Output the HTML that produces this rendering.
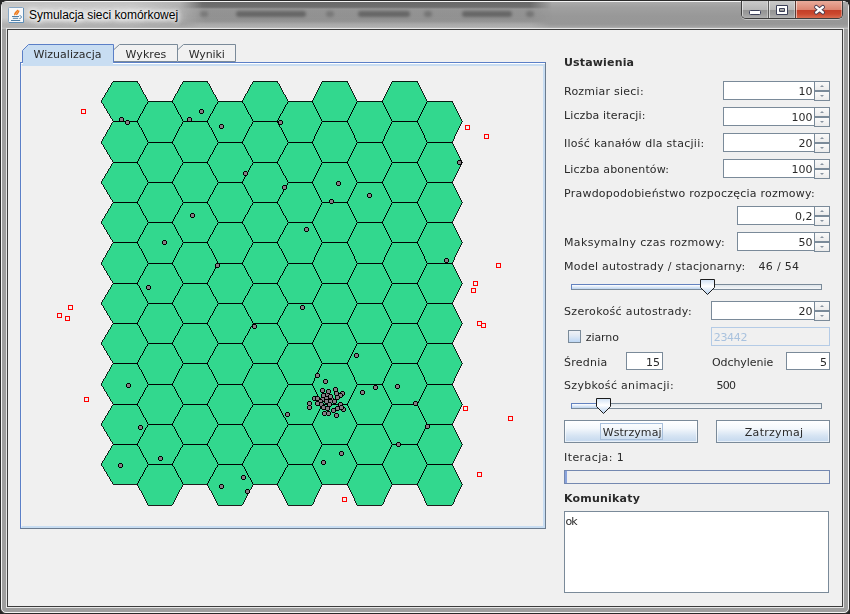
<!DOCTYPE html>
<html lang="pl"><head><meta charset="utf-8"><title>Symulacja sieci komórkowej</title>
<style>
html,body{margin:0;padding:0}
body{width:850px;height:614px;position:relative;overflow:hidden;background:#262626;font-family:"DejaVu Sans","Liberation Sans",sans-serif;font-size:11px;color:#222}
div,i{position:absolute;box-sizing:border-box;display:block}
#frame{left:0;top:0;width:850px;height:614px;border:1px solid #2a2a2a;border-radius:7px 7px 6px 6px;background:#9f9f9f;overflow:hidden}
#frame2{left:1px;top:1px;width:848px;height:612px;border:1px solid #f4f4f4;border-radius:6px 6px 5px 5px}
#tbar{left:2px;top:2px;width:846px;height:27px;background:linear-gradient(180deg,#ababab 0,#a0a0a0 5px,#989898 14px,#979797 22px,#a4a4a4 25px,#c4c4c4 27px)}
#tglow{left:2px;top:2px;width:230px;height:26px;background:linear-gradient(180deg,rgba(255,255,255,.3) 0,rgba(255,255,255,.5) 8px,rgba(255,255,255,.5) 16px,rgba(255,255,255,.22) 23px,rgba(255,255,255,.1) 26px);-webkit-mask-image:linear-gradient(90deg,#000 0,#000 130px,transparent 205px);mask-image:linear-gradient(90deg,#000 0,#000 130px,transparent 205px)}
#tblur{left:180px;top:2px;width:375px;height:26px;background:linear-gradient(180deg,rgba(40,40,40,.5) 0,rgba(50,50,50,.45) 5px,rgba(110,110,110,.2) 7px,rgba(120,120,120,.14) 19px,rgba(225,225,225,.22) 22px,rgba(225,225,225,.2) 26px);-webkit-mask-image:linear-gradient(90deg,transparent 0,#000 22px,#000 350px,transparent 372px);mask-image:linear-gradient(90deg,transparent 0,#000 22px,#000 350px,transparent 372px)}
.sm{top:11px;height:6px;background:#4a4a4a;opacity:.6;filter:blur(1.6px);border-radius:3px}
#inner1{left:6px;top:28px;width:838px;height:580px;border:1px solid #e6e6e6}
#inner2{left:7px;top:29px;width:836px;height:578px;border:1px solid #3c3c3c;background:#f0f0f0}
#title{left:29px;top:6px;height:18px;line-height:18px;font-family:"Liberation Sans",sans-serif;font-size:12px;color:#000;white-space:nowrap;letter-spacing:-.04px;text-shadow:0 0 5px #fff,0 0 5px #fff,0 0 8px #fff,0 0 12px rgba(255,255,255,.8)}
#icon{left:8px;top:7px;width:16px;height:16px}
#caps{left:741px;top:1px;width:102px;height:18px;border:1px solid #3e3e3e;border-top:none;border-radius:0 0 5px 5px;overflow:hidden;box-shadow:0 1px 0 0 rgba(255,255,255,.45)}
#caps div:after{content:"";position:absolute;left:0;top:0;right:0;bottom:0;box-shadow:inset 1px 0 0 rgba(255,255,255,.55),inset -1px 0 0 rgba(255,255,255,.35),inset 0 -1px 0 rgba(255,255,255,.4)}
#caps .m{top:0;height:18px;background:linear-gradient(180deg,#cacaca 0,#b6b6b6 9px,#959595 9.500px,#9c9c9c 13px,#b4b4b4 18px)}
#caps .c{left:53px;top:0;width:47px;height:18px;background:linear-gradient(180deg,#e9ab9b 0,#dc8470 9px,#c43f28 9.500px,#cb482e 13px,#dc7458 18px)}
.tabsel{left:22px;top:44px;width:92px;height:19px}
.panel{left:20px;top:62px;width:526px;height:467px;border:1px solid #5b7fc7;border-right-color:#6b7b8e;border-bottom-color:#6b7b8e;background:#f0f0f0}
.panel:before{content:"";position:absolute;left:0;top:0;right:0;bottom:0;border:2px solid #c8ddf2;border-top-width:3px;border-left:1px solid #f4f4f4}
.panel:after{content:"";position:absolute;left:0;top:0;right:0;height:1px;background:#fff}
.sp{height:19px;background:#fff;border:1px solid #7a8a99;box-shadow:inset 1px 0 0 #fff}
.sb{width:16px;height:10px;border:1px solid #7a8a99;background:linear-gradient(180deg,#fafafa,#ececec)}
.sb i{left:5px;width:0;height:0;border-left:2px solid transparent;border-right:2px solid transparent}
.sb i.up{top:3px;border-bottom:2.500px solid #8893a0}
.sb i.dn{top:3px;border-top:2.500px solid #8893a0}
.tf{height:18px;background:#fff;border:1px solid #7a8a99}
.btn{top:420px;height:23px;border:1px solid #7a8a99;background:linear-gradient(180deg,#ffffff 0,#f4f8fc 35%,#d6e4f3 70%,#c4d8ee 100%);box-shadow:inset 0 0 0 1px rgba(255,255,255,.6)}
.trk{height:6px;border:1px solid #7a8a99;background:linear-gradient(180deg,#dfe5ea,#f4f6f8)}
.trkf{height:6px;border:1px solid #6382bf;border-bottom-color:#7a8a99;border-right:none;background:linear-gradient(180deg,#ffffff,#bcd3ee)}
svg{position:absolute;left:0;top:0;will-change:transform}
svg text{font-family:"DejaVu Sans","Liberation Sans",sans-serif;font-size:11px;fill:#2a2a2a}
svg text.b{font-weight:bold}
</style></head><body>
<div id="frame"></div><div id="frame2"></div>
<div id="tbar"></div><div id="tblur"></div><div id="tglow"></div>
<div class="sm" style="left:236px;width:70px"></div><div class="sm" style="left:358px;width:52px"></div><div class="sm" style="left:462px;width:50px"></div><div class="sm" style="left:200px;width:8px;opacity:.35"></div><div class="sm" style="left:326px;width:8px;opacity:.35"></div><div class="sm" style="left:424px;width:8px;opacity:.4"></div><div class="sm" style="left:526px;width:8px;opacity:.4"></div>
<div id="inner1"></div><div id="inner2"></div>
<div id="title">Symulacja sieci komórkowej</div>
<div id="caps"><div class="m" style="left:0;width:26px"></div><div class="m" style="left:26px;width:27px;border-left:1px solid #5a5a5a"></div><div class="c" style="border-left:1px solid #5a3a34"></div></div>

<div class="panel"></div>
<div class="sp" style="left:723px;top:81px;width:92px"></div><div class="sb" style="left:814px;top:81px"><i class="up"></i></div><div class="sb" style="left:814px;top:91px"><i class="dn"></i></div><div class="sp" style="left:723px;top:107px;width:92px"></div><div class="sb" style="left:814px;top:107px"><i class="up"></i></div><div class="sb" style="left:814px;top:117px"><i class="dn"></i></div><div class="sp" style="left:723px;top:133px;width:92px"></div><div class="sb" style="left:814px;top:133px"><i class="up"></i></div><div class="sb" style="left:814px;top:143px"><i class="dn"></i></div><div class="sp" style="left:723px;top:159px;width:92px"></div><div class="sb" style="left:814px;top:159px"><i class="up"></i></div><div class="sb" style="left:814px;top:169px"><i class="dn"></i></div><div class="sp" style="left:737px;top:206px;width:78px"></div><div class="sb" style="left:814px;top:206px"><i class="up"></i></div><div class="sb" style="left:814px;top:216px"><i class="dn"></i></div><div class="sp" style="left:737px;top:232px;width:78px"></div><div class="sb" style="left:814px;top:232px"><i class="up"></i></div><div class="sb" style="left:814px;top:242px"><i class="dn"></i></div><div class="sp" style="left:711px;top:301px;width:104px"></div><div class="sb" style="left:814px;top:301px"><i class="up"></i></div><div class="sb" style="left:814px;top:311px"><i class="dn"></i></div>
<div class="tf" style="left:711px;top:327px;width:119px;height:19px;background:#f0f0f0;border-color:#b4cbe6"></div>
<div class="tf" style="left:626px;top:352px;width:37px"></div>
<div class="tf" style="left:786px;top:352px;width:44px"></div>
<div class="cb" style="left:568px;top:330px;width:13px;height:13px;border:1px solid #7a8a99;background:linear-gradient(180deg,#f0f2f6 0,#dfe8f4 45%,#bdd7f5 100%)"></div>
<div class="trk" style="left:571px;top:284px;width:251px"></div><div class="trkf" style="left:571px;top:284px;width:136px"></div>
<div class="trk" style="left:571px;top:403px;width:251px"></div><div class="trkf" style="left:571px;top:403px;width:32px"></div>
<div class="btn" style="left:564px;width:134px"></div><div class="btn" style="left:716px;width:114px"></div>
<div style="left:600px;top:423px;width:63px;height:17px;border:1px solid #a8c0dc"></div>
<div style="left:564px;top:470px;width:266px;height:14px;border:1px solid #7488b0;background:#f0f0f0"></div>
<div style="left:565px;top:471px;width:2px;height:12px;background:#8aa3dc"></div>
<div style="left:564px;top:511px;width:265px;height:82px;border:1px solid #7a8a99;background:#fff"></div>
<svg width="850" height="614" viewBox="0 0 850 614">
<defs>
<g id="d"><path d="M1 0h3v1h1v3h-1v1h-3v-1h-1v-3h1z" fill="#000"/><rect x="1" y="1" width="3" height="3" fill="#857f85"/></g>
<linearGradient id="tg" x1="0" y1="0" x2="0" y2="1"><stop offset="0" stop-color="#cfe0f4"/><stop offset=".45" stop-color="#ffffff"/><stop offset="1" stop-color="#b4cfee"/></linearGradient>
<g id="th"><path d="M.5 .5h14v8l-7 7-7-7z" fill="url(#tg)" stroke="#1c1c1c" stroke-width="1"/></g>
</defs>
<!-- tabs -->
<path d="M22.5 62.5V50.5L28.5 44.5H113.5V62.5" fill="#c8ddf2" stroke="#5b7fc7"/>
<rect x="23" y="62" width="90" height="4" fill="#c8ddf2"/>
<path d="M114 49.5L119.500 44.500H177.500V61.500H114" fill="#f1f1f1" stroke="#7a8a99"/>
<path d="M178 49.5L183.500 44.500H235.500V61.500H178" fill="#f1f1f1" stroke="#7a8a99"/>
<g shape-rendering="crispEdges">
<path transform="translate(-.25 -.25)" d="M101.5 101.5L113.5 81.5L137.5 81.5L148.5 101.5L137.5 121.5L113.5 121.5ZM101.5 142.5L113.5 121.5L137.5 121.5L148.5 142.5L137.5 162.5L113.5 162.5ZM101.5 182.5L113.5 162.5L137.5 162.5L148.5 182.5L137.5 202.5L113.5 202.5ZM101.5 222.5L113.5 202.5L137.5 202.5L148.5 222.5L137.5 242.5L113.5 242.5ZM101.5 263.5L113.5 242.5L137.5 242.5L148.5 263.5L137.5 283.5L113.5 283.5ZM101.5 303.5L113.5 283.5L137.5 283.5L148.5 303.5L137.5 323.5L113.5 323.5ZM101.5 343.5L113.5 323.5L137.5 323.5L148.5 343.5L137.5 363.5L113.5 363.5ZM101.5 384.5L113.5 363.5L137.5 363.5L148.5 384.5L137.5 404.5L113.5 404.5ZM101.5 424.5L113.5 404.5L137.5 404.5L148.5 424.5L137.5 444.5L113.5 444.5ZM101.5 464.5L113.5 444.5L137.5 444.5L148.5 464.5L137.5 484.5L113.5 484.5ZM137.5 121.5L148.5 101.5L172.5 101.5L183.5 121.5L172.5 142.5L148.5 142.5ZM137.5 162.5L148.5 142.5L172.5 142.5L183.5 162.5L172.5 182.5L148.5 182.5ZM137.5 202.5L148.5 182.5L172.5 182.5L183.5 202.5L172.5 222.5L148.5 222.5ZM137.5 242.5L148.5 222.5L172.5 222.5L183.5 242.5L172.5 263.5L148.5 263.5ZM137.5 283.5L148.5 263.5L172.5 263.5L183.5 283.5L172.5 303.5L148.5 303.5ZM137.5 323.5L148.5 303.5L172.5 303.5L183.5 323.5L172.5 343.5L148.5 343.5ZM137.5 363.5L148.5 343.5L172.5 343.5L183.5 363.5L172.5 384.5L148.5 384.5ZM137.5 404.5L148.5 384.5L172.5 384.5L183.5 404.5L172.5 424.5L148.5 424.5ZM137.5 444.5L148.5 424.5L172.5 424.5L183.5 444.5L172.5 464.5L148.5 464.5ZM137.5 484.5L148.5 464.5L172.5 464.5L183.5 484.5L172.5 505.5L148.5 505.5ZM172.5 101.5L183.5 81.5L207.5 81.5L218.5 101.5L207.5 121.5L183.5 121.5ZM172.5 142.5L183.5 121.5L207.5 121.5L218.5 142.5L207.5 162.5L183.5 162.5ZM172.5 182.5L183.5 162.5L207.5 162.5L218.5 182.5L207.5 202.5L183.5 202.5ZM172.5 222.5L183.5 202.5L207.5 202.5L218.5 222.5L207.5 242.5L183.5 242.5ZM172.5 263.5L183.5 242.5L207.5 242.5L218.5 263.5L207.5 283.5L183.5 283.5ZM172.5 303.5L183.5 283.5L207.5 283.5L218.5 303.5L207.5 323.5L183.5 323.5ZM172.5 343.5L183.5 323.5L207.5 323.5L218.5 343.5L207.5 363.5L183.5 363.5ZM172.5 384.5L183.5 363.5L207.5 363.5L218.5 384.5L207.5 404.5L183.5 404.5ZM172.5 424.5L183.5 404.5L207.5 404.5L218.5 424.5L207.5 444.5L183.5 444.5ZM172.5 464.5L183.5 444.5L207.5 444.5L218.5 464.5L207.5 484.5L183.5 484.5ZM207.5 121.5L218.5 101.5L242.5 101.5L253.5 121.5L242.5 142.5L218.5 142.5ZM207.5 162.5L218.5 142.5L242.5 142.5L253.5 162.5L242.5 182.5L218.5 182.5ZM207.5 202.5L218.5 182.5L242.5 182.5L253.5 202.5L242.5 222.5L218.5 222.5ZM207.5 242.5L218.5 222.5L242.5 222.5L253.5 242.5L242.5 263.5L218.5 263.5ZM207.5 283.5L218.5 263.5L242.5 263.5L253.5 283.5L242.5 303.5L218.5 303.5ZM207.5 323.5L218.5 303.5L242.5 303.5L253.5 323.5L242.5 343.5L218.5 343.5ZM207.5 363.5L218.5 343.5L242.5 343.5L253.5 363.5L242.5 384.5L218.5 384.5ZM207.5 404.5L218.5 384.5L242.5 384.5L253.5 404.5L242.5 424.5L218.5 424.5ZM207.5 444.5L218.5 424.5L242.5 424.5L253.5 444.5L242.5 464.5L218.5 464.5ZM207.5 484.5L218.5 464.5L242.5 464.5L253.5 484.5L242.5 505.5L218.5 505.5ZM242.5 101.5L253.5 81.5L277.5 81.5L288.5 101.5L277.5 121.5L253.5 121.5ZM242.5 142.5L253.5 121.5L277.5 121.5L288.5 142.5L277.5 162.5L253.5 162.5ZM242.5 182.5L253.5 162.5L277.5 162.5L288.5 182.5L277.5 202.5L253.5 202.5ZM242.5 222.5L253.5 202.5L277.5 202.5L288.5 222.5L277.5 242.5L253.5 242.5ZM242.5 263.5L253.5 242.5L277.5 242.5L288.5 263.5L277.5 283.5L253.5 283.5ZM242.5 303.5L253.5 283.5L277.5 283.5L288.5 303.5L277.5 323.5L253.5 323.5ZM242.5 343.5L253.5 323.5L277.5 323.5L288.5 343.5L277.5 363.5L253.5 363.5ZM242.5 384.5L253.5 363.5L277.5 363.5L288.5 384.5L277.5 404.5L253.5 404.5ZM242.5 424.5L253.5 404.5L277.5 404.5L288.5 424.5L277.5 444.5L253.5 444.5ZM242.5 464.5L253.5 444.5L277.5 444.5L288.5 464.5L277.5 484.5L253.5 484.5ZM277.5 121.5L288.5 101.5L312.5 101.5L322.5 121.5L312.5 142.5L288.5 142.5ZM277.5 162.5L288.5 142.5L312.5 142.5L322.5 162.5L312.5 182.5L288.5 182.5ZM277.5 202.5L288.5 182.5L312.5 182.5L322.5 202.5L312.5 222.5L288.5 222.5ZM277.5 242.5L288.5 222.5L312.5 222.5L322.5 242.5L312.5 263.5L288.5 263.5ZM277.5 283.5L288.5 263.5L312.5 263.5L322.5 283.5L312.5 303.5L288.5 303.5ZM277.5 323.5L288.5 303.5L312.5 303.5L322.5 323.5L312.5 343.5L288.5 343.5ZM277.5 363.5L288.5 343.5L312.5 343.5L322.5 363.5L312.5 384.5L288.5 384.5ZM277.5 404.5L288.5 384.5L312.5 384.5L322.5 404.5L312.5 424.5L288.5 424.5ZM277.5 444.5L288.5 424.5L312.5 424.5L322.5 444.5L312.5 464.5L288.5 464.5ZM277.5 484.5L288.5 464.5L312.5 464.5L322.5 484.5L312.5 505.5L288.5 505.5ZM312.5 101.5L322.5 81.5L347.5 81.5L357.5 101.5L347.5 121.5L322.5 121.5ZM312.5 142.5L322.5 121.5L347.5 121.5L357.5 142.5L347.5 162.5L322.5 162.5ZM312.5 182.5L322.5 162.5L347.5 162.5L357.5 182.5L347.5 202.5L322.5 202.5ZM312.5 222.5L322.5 202.5L347.5 202.5L357.5 222.5L347.5 242.5L322.5 242.5ZM312.5 263.5L322.5 242.5L347.5 242.5L357.5 263.5L347.5 283.5L322.5 283.5ZM312.5 303.5L322.5 283.5L347.5 283.5L357.5 303.5L347.5 323.5L322.5 323.5ZM312.5 343.5L322.5 323.5L347.5 323.5L357.5 343.5L347.5 363.5L322.5 363.5ZM312.5 384.5L322.5 363.5L347.5 363.5L357.5 384.5L347.5 404.5L322.5 404.5ZM312.5 424.5L322.5 404.5L347.5 404.5L357.5 424.5L347.5 444.5L322.5 444.5ZM312.5 464.5L322.5 444.5L347.5 444.5L357.5 464.5L347.5 484.5L322.5 484.5ZM347.5 121.5L357.5 101.5L382.5 101.5L392.5 121.5L382.5 142.5L357.5 142.5ZM347.5 162.5L357.5 142.5L382.5 142.5L392.5 162.5L382.5 182.5L357.5 182.5ZM347.5 202.5L357.5 182.5L382.5 182.5L392.5 202.5L382.5 222.5L357.5 222.5ZM347.5 242.5L357.5 222.5L382.5 222.5L392.5 242.5L382.5 263.5L357.5 263.5ZM347.5 283.5L357.5 263.5L382.5 263.5L392.5 283.5L382.5 303.5L357.5 303.5ZM347.5 323.5L357.5 303.5L382.5 303.5L392.5 323.5L382.5 343.5L357.5 343.5ZM347.5 363.5L357.5 343.5L382.5 343.5L392.5 363.5L382.5 384.5L357.5 384.5ZM347.5 404.5L357.5 384.5L382.5 384.5L392.5 404.5L382.5 424.5L357.5 424.5ZM347.5 444.5L357.5 424.5L382.5 424.5L392.5 444.5L382.5 464.5L357.5 464.5ZM347.5 484.5L357.5 464.5L382.5 464.5L392.5 484.5L382.5 505.5L357.5 505.5ZM382.5 101.5L392.5 81.5L417.5 81.5L427.5 101.5L417.5 121.5L392.5 121.5ZM382.5 142.5L392.5 121.5L417.5 121.5L427.5 142.5L417.5 162.5L392.5 162.5ZM382.5 182.5L392.5 162.5L417.5 162.5L427.5 182.5L417.5 202.5L392.5 202.5ZM382.5 222.5L392.5 202.5L417.5 202.5L427.5 222.5L417.5 242.5L392.5 242.5ZM382.5 263.5L392.5 242.5L417.5 242.5L427.5 263.5L417.5 283.5L392.5 283.5ZM382.5 303.5L392.5 283.5L417.5 283.5L427.5 303.5L417.5 323.5L392.5 323.5ZM382.5 343.5L392.5 323.5L417.5 323.5L427.5 343.5L417.5 363.5L392.5 363.5ZM382.5 384.5L392.5 363.5L417.5 363.5L427.5 384.5L417.5 404.5L392.5 404.5ZM382.5 424.5L392.5 404.5L417.5 404.5L427.5 424.5L417.5 444.5L392.5 444.5ZM382.5 464.5L392.5 444.5L417.5 444.5L427.5 464.5L417.5 484.5L392.5 484.5ZM417.5 121.5L427.5 101.5L452.5 101.5L462.5 121.5L452.5 142.5L427.5 142.5ZM417.5 162.5L427.5 142.5L452.5 142.5L462.5 162.5L452.5 182.5L427.5 182.5ZM417.5 202.5L427.5 182.5L452.5 182.5L462.5 202.5L452.5 222.5L427.5 222.5ZM417.5 242.5L427.5 222.5L452.5 222.5L462.5 242.5L452.5 263.5L427.5 263.5ZM417.5 283.5L427.5 263.5L452.5 263.5L462.5 283.5L452.5 303.5L427.5 303.5ZM417.5 323.5L427.5 303.5L452.5 303.5L462.5 323.5L452.5 343.5L427.5 343.5ZM417.5 363.5L427.5 343.5L452.5 343.5L462.5 363.5L452.5 384.5L427.5 384.5ZM417.5 404.5L427.5 384.5L452.5 384.5L462.5 404.5L452.5 424.5L427.5 424.5ZM417.5 444.5L427.5 424.5L452.5 424.5L462.5 444.5L452.5 464.5L427.5 464.5ZM417.5 484.5L427.5 464.5L452.5 464.5L462.5 484.5L452.5 505.5L427.5 505.5Z" fill="#32d88e" stroke="#000" stroke-width="0.87"/>
<g fill="none" stroke="#f00" stroke-width="1"><rect x="81.5" y="109.5" width="4" height="4"/><rect x="465.5" y="125.5" width="4" height="4"/><rect x="484.5" y="134.5" width="4" height="4"/><rect x="496.5" y="263.5" width="4" height="4"/><rect x="473.5" y="281.5" width="4" height="4"/><rect x="471.5" y="288.5" width="4" height="4"/><rect x="68.5" y="305.5" width="4" height="4"/><rect x="57.5" y="313.5" width="4" height="4"/><rect x="65.5" y="316.5" width="4" height="4"/><rect x="84.5" y="397.5" width="4" height="4"/><rect x="477.5" y="321.5" width="4" height="4"/><rect x="481.5" y="323.5" width="4" height="4"/><rect x="463.5" y="406.5" width="4" height="4"/><rect x="508.5" y="416.5" width="4" height="4"/><rect x="477.5" y="472.5" width="4" height="4"/><rect x="342.5" y="497.5" width="4" height="4"/></g>
<use href="#d" x="324" y="393"/><use href="#d" x="321" y="393"/><use href="#d" x="325" y="392"/><use href="#d" x="320" y="397"/><use href="#d" x="318" y="399"/><use href="#d" x="319" y="402"/><use href="#d" x="329" y="397"/><use href="#d" x="312" y="396"/><use href="#d" x="340" y="391"/><use href="#d" x="334" y="391"/><use href="#d" x="338" y="402"/><use href="#d" x="341" y="407"/><use href="#d" x="320" y="388"/><use href="#d" x="326" y="389"/><use href="#d" x="333" y="387"/><use href="#d" x="338" y="393"/><use href="#d" x="335" y="395"/><use href="#d" x="328" y="394"/><use href="#d" x="324" y="396"/><use href="#d" x="315" y="396"/><use href="#d" x="315" y="401"/><use href="#d" x="307" y="401"/><use href="#d" x="307" y="405"/><use href="#d" x="324" y="399"/><use href="#d" x="328" y="399"/><use href="#d" x="332" y="399"/><use href="#d" x="327" y="402"/><use href="#d" x="321" y="405"/><use href="#d" x="325" y="406"/><use href="#d" x="331" y="408"/><use href="#d" x="335" y="406"/><use href="#d" x="339" y="405"/><use href="#d" x="322" y="411"/><use href="#d" x="326" y="411"/><use href="#d" x="334" y="413"/><use href="#d" x="119" y="117"/><use href="#d" x="125" y="120"/><use href="#d" x="187" y="117"/><use href="#d" x="199" y="109"/><use href="#d" x="219" y="124"/><use href="#d" x="243" y="171"/><use href="#d" x="278" y="120"/><use href="#d" x="336" y="181"/><use href="#d" x="282" y="185"/><use href="#d" x="457" y="160"/><use href="#d" x="190" y="213"/><use href="#d" x="162" y="240"/><use href="#d" x="146" y="285"/><use href="#d" x="329" y="199"/><use href="#d" x="367" y="193"/><use href="#d" x="304" y="227"/><use href="#d" x="215" y="263"/><use href="#d" x="444" y="258"/><use href="#d" x="126" y="383"/><use href="#d" x="300" y="305"/><use href="#d" x="252" y="324"/><use href="#d" x="354" y="353"/><use href="#d" x="315" y="373"/><use href="#d" x="323" y="379"/><use href="#d" x="360" y="390"/><use href="#d" x="285" y="412"/><use href="#d" x="373" y="385"/><use href="#d" x="395" y="384"/><use href="#d" x="413" y="401"/><use href="#d" x="138" y="425"/><use href="#d" x="158" y="456"/><use href="#d" x="118" y="463"/><use href="#d" x="339" y="451"/><use href="#d" x="321" y="460"/><use href="#d" x="241" y="475"/><use href="#d" x="219" y="484"/><use href="#d" x="245" y="489"/><use href="#d" x="425" y="424"/><use href="#d" x="396" y="442"/>
</g>
<use href="#th" x="700" y="279"/><use href="#th" x="596" y="398"/>
<!-- caption icons -->
<rect x="749.5" y="10.5" width="11" height="4" rx="1" fill="#fff" stroke="#3c4058"/>
<path d="M776.5 5.5h11v9h-11z M779.500 8.500v3h5v-3z" fill="#fff" fill-rule="evenodd" stroke="#3c4058"/>
<path d="M816.300 7.100L822.800 12.400M822.800 7.100L816.300 12.400" fill="none" stroke="#4a3c50" stroke-width="4.300" stroke-linecap="round"/>
<path d="M816.300 7.100L822.800 12.400M822.800 7.100L816.300 12.400" fill="none" stroke="#fff" stroke-width="2.500" stroke-linecap="round"/>
<!-- java icon -->
<rect x="8.5" y="7.5" width="15" height="15" rx="1" fill="#f7f8fa" stroke="#86a6c4"/>
<path d="M9 22.5h14.500V8" fill="none" stroke="#5f8fb8"/>
<path d="M15 15.2c-1.200-2 2.400-3.600 2.800-5.400M16.800 15c-.6-1.600 2.600-2.600 1.800-4.400" fill="none" stroke="#ee7a1c" stroke-width="1.500"/>
<path d="M12 16.500h7M12.800 18.300h5.400M11 20.500h9.200" fill="none" stroke="#4f7fa6" stroke-width="1"/>
<path d="M19.600 15.600c2.400 0 2.400 2.900-.2 3" fill="none" stroke="#4f7fa6" stroke-width="1"/>
<text x="564" y="66" textLength="70" lengthAdjust="spacing" class="b">Ustawienia</text><text x="564" y="95" textLength="79.6" lengthAdjust="spacing">Rozmiar sieci:</text><text x="564" y="119" textLength="81.4" lengthAdjust="spacing">Liczba iteracji:</text><text x="564" y="147" textLength="140.2" lengthAdjust="spacing">Ilość kanałów dla stacjii:</text><text x="564" y="173" textLength="105" lengthAdjust="spacing">Liczba abonentów:</text><text x="564" y="197" textLength="250.7" lengthAdjust="spacing">Prawdopodobieństwo rozpoczęcia rozmowy:</text><text x="564" y="246" textLength="160.7" lengthAdjust="spacing">Maksymalny czas rozmowy:</text><text x="564" y="270" textLength="181.2" lengthAdjust="spacing">Model autostrady / stacjonarny:</text><text x="758.6" y="270" textLength="40.3" lengthAdjust="spacing">46 / 54</text><text x="564" y="315" textLength="127.6" lengthAdjust="spacing">Szerokość autostrady:</text><text x="585.8" y="341" textLength="33.2" lengthAdjust="spacing">ziarno</text><text x="564" y="366" textLength="43.2" lengthAdjust="spacing">Średnia</text><text x="711.9" y="366" textLength="61.3" lengthAdjust="spacing">Odchylenie</text><text x="564" y="389" textLength="109.7" lengthAdjust="spacing">Szybkość animacji:</text><text x="716.6" y="389" textLength="19.4" lengthAdjust="spacing">500</text><text x="602.7" y="436" textLength="58.8" lengthAdjust="spacing">Wstrzymaj</text><text x="744.8" y="436" textLength="58.2" lengthAdjust="spacing">Zatrzymaj</text><text x="564" y="461" textLength="59.8" lengthAdjust="spacing">Iteracja: 1</text><text x="564" y="502" textLength="75.8" lengthAdjust="spacing" class="b">Komunikaty</text><text x="565.6" y="525" textLength="12.1" lengthAdjust="spacing">ok</text><text x="33.5" y="58" textLength="68" lengthAdjust="spacing">Wizualizacja</text><text x="125.6" y="58" textLength="40.7" lengthAdjust="spacing">Wykres</text><text x="188.7" y="58" textLength="36" lengthAdjust="spacing">Wyniki</text><text x="812.4" y="95" text-anchor="end">10</text><text x="812.4" y="121" text-anchor="end">100</text><text x="812.4" y="147" text-anchor="end">20</text><text x="812.4" y="173" text-anchor="end">100</text><text x="812.4" y="220" text-anchor="end">0,2</text><text x="812.4" y="246" text-anchor="end">50</text><text x="812.4" y="315" text-anchor="end">20</text><text x="660" y="366" text-anchor="end">15</text><text x="827" y="366" text-anchor="end">5</text><text x="713.7" y="341" style="fill:#a9c2de" textLength="33.7" lengthAdjust="spacing">23442</text>
</svg>
</body></html>
